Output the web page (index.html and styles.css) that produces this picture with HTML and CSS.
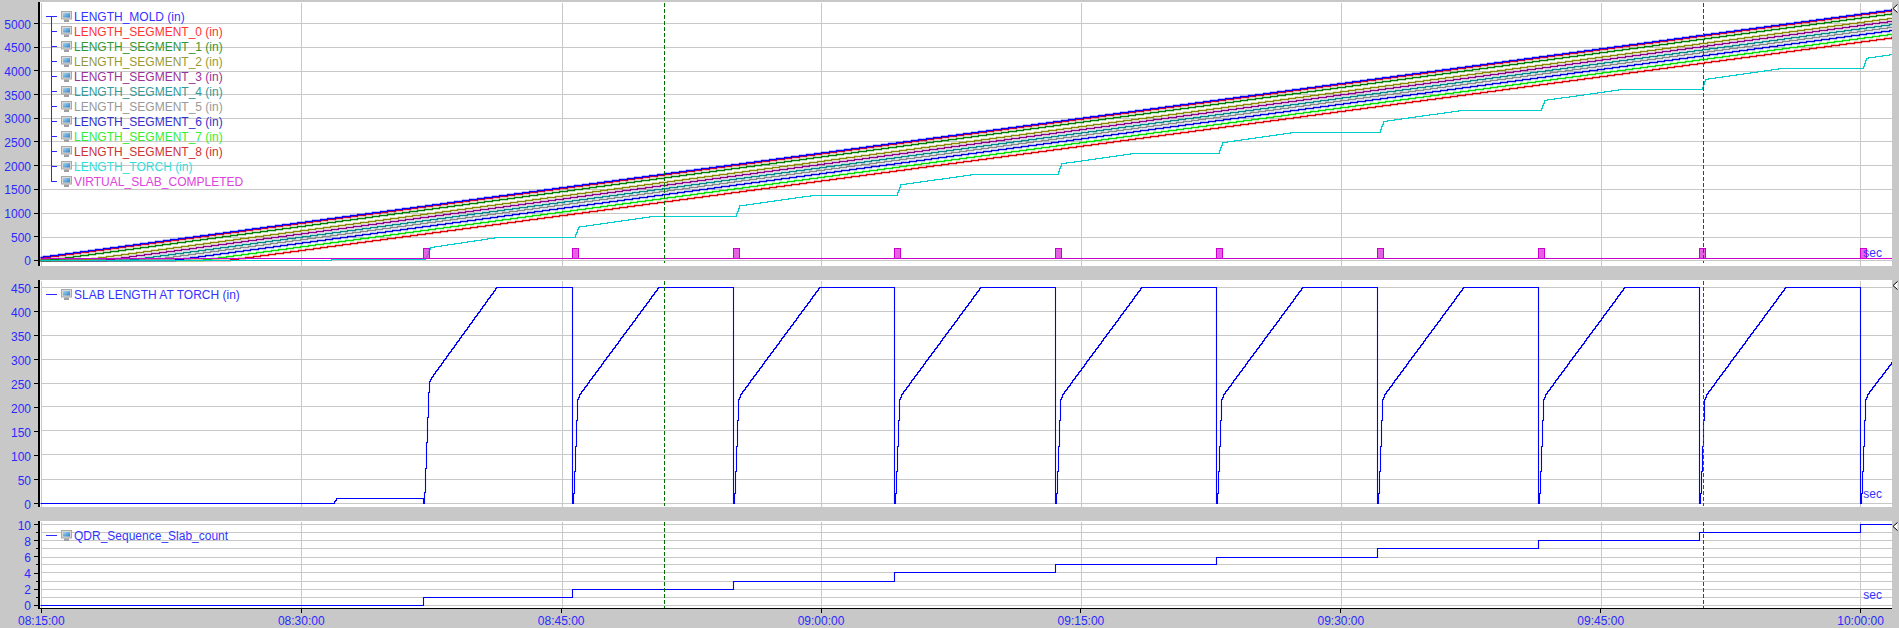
FILE: index.html
```html
<!DOCTYPE html>
<html lang="en">
<head>
    <meta charset="UTF-8">
    <title>Trend</title>
    <link rel="stylesheet" href="styles.css">
</head>
<body>
    <svg class="defs" width="0" height="0">
        <defs>
            <linearGradient id="screen" x1="0" y1="0" x2="1" y2="1">
                <stop offset="0" stop-color="#a8d8f0"/>
                <stop offset="1" stop-color="#2f80c8"/>
            </linearGradient>
            <symbol id="monitor" viewBox="0 0 11 11">
                <rect x="0.5" y="0.5" width="10" height="7.5" fill="#d8d8d8" stroke="#a8a8a8"/>
                <rect x="2" y="2" width="7" height="4.5" fill="url(#screen)"/>
                <rect x="3" y="8.5" width="5" height="2.5" fill="#a0a0a0"/>
            </symbol>
            <symbol id="marker" viewBox="0 0 7 9">
                <path d="M5.5 0.5 L1 4.5 L5.5 8.5" fill="#fff" stroke="#000"/>
            </symbol>
        </defs>
    </svg>

    <div class="charts">
        <div class="panel panel-top">
            <div class="yaxis">
                <div class="tick"><span>5000</span></div>
                <div class="tick"><span>4500</span></div>
                <div class="tick"><span>4000</span></div>
                <div class="tick"><span>3500</span></div>
                <div class="tick"><span>3000</span></div>
                <div class="tick"><span>2500</span></div>
                <div class="tick"><span>2000</span></div>
                <div class="tick"><span>1500</span></div>
                <div class="tick"><span>1000</span></div>
                <div class="tick"><span>500</span></div>
                <div class="tick"><span>0</span></div>
            </div>
            <div class="plot">
                <svg id="lengths" class="graph" viewBox="40 2 1852 264"></svg>
                <ul class="legend tree">
                    <li class="c-mold"><svg class="icon"><use href="#monitor"/></svg>LENGTH_MOLD (in)</li>
                    <li class="c-seg0"><svg class="icon"><use href="#monitor"/></svg>LENGTH_SEGMENT_0 (in)</li>
                    <li class="c-seg1"><svg class="icon"><use href="#monitor"/></svg>LENGTH_SEGMENT_1 (in)</li>
                    <li class="c-seg2"><svg class="icon"><use href="#monitor"/></svg>LENGTH_SEGMENT_2 (in)</li>
                    <li class="c-seg3"><svg class="icon"><use href="#monitor"/></svg>LENGTH_SEGMENT_3 (in)</li>
                    <li class="c-seg4"><svg class="icon"><use href="#monitor"/></svg>LENGTH_SEGMENT_4 (in)</li>
                    <li class="c-seg5"><svg class="icon"><use href="#monitor"/></svg>LENGTH_SEGMENT_5 (in)</li>
                    <li class="c-seg6"><svg class="icon"><use href="#monitor"/></svg>LENGTH_SEGMENT_6 (in)</li>
                    <li class="c-seg7"><svg class="icon"><use href="#monitor"/></svg>LENGTH_SEGMENT_7 (in)</li>
                    <li class="c-seg8"><svg class="icon"><use href="#monitor"/></svg>LENGTH_SEGMENT_8 (in)</li>
                    <li class="c-torch"><svg class="icon"><use href="#monitor"/></svg>LENGTH_TORCH (in)</li>
                    <li class="c-virtual"><svg class="icon"><use href="#monitor"/></svg>VIRTUAL_SLAB_COMPLETED</li>
                </ul>
                <div class="unit">sec</div>
            </div>
            <div class="gutter"><svg class="marker"><use href="#marker"/></svg></div>
        </div>

        <div class="panel panel-mid">
            <div class="yaxis">
                <div class="tick"><span>450</span></div>
                <div class="tick"><span>400</span></div>
                <div class="tick"><span>350</span></div>
                <div class="tick"><span>300</span></div>
                <div class="tick"><span>250</span></div>
                <div class="tick"><span>200</span></div>
                <div class="tick"><span>150</span></div>
                <div class="tick"><span>100</span></div>
                <div class="tick"><span>50</span></div>
                <div class="tick"><span>0</span></div>
            </div>
            <div class="plot">
                <svg id="slab" class="graph" viewBox="40 280 1852 227"></svg>
                <ul class="legend">
                    <li class="c-mold"><svg class="icon"><use href="#monitor"/></svg>SLAB LENGTH AT TORCH (in)</li>
                </ul>
                <div class="unit">sec</div>
            </div>
            <div class="gutter"><svg class="marker"><use href="#marker"/></svg></div>
        </div>

        <div class="panel panel-low">
            <div class="yaxis">
                <div class="tick"><span>10</span></div>
                <div class="tick minor"></div>
                <div class="tick"><span>8</span></div>
                <div class="tick minor"></div>
                <div class="tick"><span>6</span></div>
                <div class="tick minor"></div>
                <div class="tick"><span>4</span></div>
                <div class="tick minor"></div>
                <div class="tick"><span>2</span></div>
                <div class="tick minor"></div>
                <div class="tick"><span>0</span></div>
            </div>
            <div class="plot">
                <svg id="count" class="graph" viewBox="40 521 1852 87"></svg>
                <ul class="legend">
                    <li class="c-mold"><svg class="icon"><use href="#monitor"/></svg>QDR_Sequence_Slab_count</li>
                </ul>
                <div class="unit">sec</div>
            </div>
            <div class="gutter"><svg class="marker"><use href="#marker"/></svg></div>
        </div>
    </div>

    <div class="xaxis">
        <div class="xlabel">08:15:00</div>
        <div class="xlabel">08:30:00</div>
        <div class="xlabel">08:45:00</div>
        <div class="xlabel">09:00:00</div>
        <div class="xlabel">09:15:00</div>
        <div class="xlabel">09:30:00</div>
        <div class="xlabel">09:45:00</div>
        <div class="xlabel">10:00:00</div>
    </div>

    <script src="script.js"></script>
</body>
</html>
```

FILE: styles.css
```css
* {margin: 0;padding: 0;box-sizing: border-box;}

html, body {
    height: 628px;
    overflow: hidden;
}
body {
    background-color: #c8c8c8;
    font-family: "Liberation Sans", Arial, sans-serif;
    font-size: 12px;
    color: #2a2aff;
}
.defs {
    position: absolute;
}

.charts {
    display: flex;
    flex-direction: column;
    gap: 14px;
    padding-top: 2px;
}
.panel {
    display: flex;
}
.panel-top {height: 264px;}
.panel-mid {height: 227px;}
.panel-low {height: 88px;}

.yaxis {
    display: flex;
    flex-direction: column;
    justify-content: space-between;
    width: 38px;
}
.panel-top .yaxis {padding: 21px 0 5px;}
.panel-mid .yaxis {padding: 7px 0 3px;}
.panel-low .yaxis {padding: 3px 0 3px;}

.tick {
    display: flex;
    align-items: center;
    justify-content: flex-end;
    gap: 3px;
    height: 1px;
    line-height: 14px;
}
.tick span {
    padding-top: 2px;
}
.tick::after {
    content: "";
    width: 4px;
    height: 1px;
    background-color: #000;
}
.tick.minor::after {
    width: 2px;
}

.plot {
    position: relative;
    width: 1854px;
    background-color: #fff;
    border-left: 2px solid #000;
}
.panel-low .plot {
    border-bottom: 1px solid #000;
}
.graph {
    display: block;
    width: 1852px;
    height: 100%;
}

.legend {
    position: absolute;
    top: 7px;
    left: 6px;
    list-style: none;
    line-height: 15px;
}
.legend li {
    position: relative;
    display: flex;
    align-items: center;
    gap: 2px;
    height: 15px;
    padding: 2px 0 0 15px;
    white-space: nowrap;
}
.legend li::before {
    content: "";
    position: absolute;
    left: 5px;
    top: 7px;
    width: 6px;
    height: 1px;
    background-color: #2a2aff;
}
.legend li:first-child::before {
    left: 0;
    width: 11px;
}
.tree li:not(:last-child)::after {
    content: "";
    position: absolute;
    left: 5px;
    top: 7px;
    width: 1px;
    height: 15px;
    background-color: #2a2aff;
}
.icon {
    width: 11px;
    height: 11px;
    flex: none;
    margin-top: -2px;
}
.c-mold {color: #3333ff;}
.c-seg0 {color: #ff3333;}
.c-seg1 {color: #339933;}
.c-seg2 {color: #999933;}
.c-seg3 {color: #993399;}
.c-seg4 {color: #339999;}
.c-seg5 {color: #999999;}
.c-seg6 {color: #3333cc;}
.c-seg7 {color: #33ee33;}
.c-seg8 {color: #cc3333;}
.c-torch {color: #33dddd;}
.c-virtual {color: #dd44dd;}

.unit {
    position: absolute;
    right: 10px;
    bottom: 6px;
    line-height: 14px;
    color: #3333ff;
}

.gutter {
    width: 7px;
    padding-top: 2px;
}
.panel-mid .gutter, .panel-low .gutter {
    padding-top: 1px;
}
.marker {
    display: block;
    width: 7px;
    height: 9px;
}

.xaxis {
    display: flex;
    justify-content: space-between;
    padding: 0 15px 0 18px;
    line-height: 14px;
}
.xlabel {
    display: flex;
    flex-direction: column;
    align-items: center;
    gap: 1px;
}
.xlabel::before {
    content: "";
    width: 1px;
    height: 4px;
    background-color: #000;
}
```

FILE: script.js
```js
var LEFT = 40;
var RIGHT = 1892;
var gridX = [41, 301, 562, 821, 1081, 1341, 1601, 1860];
var cursorX = [664, 1703];
// x of each slab cut, same for all three charts
var cuts = [423, 572, 733, 894, 1055, 1216, 1377, 1538, 1699, 1860];

// walk the points pixel by pixel so that sloped parts come out as stairs
function stairs(points) {
    var d = "M" + points[0][0] + " " + Math.round(points[0][1]);
    for (var i = 1; i < points.length; i++) {
        var a = points[i - 1];
        var b = points[i];
        var last = Math.round(a[1]);
        if (b[0] == a[0]) {
            last = Math.round(b[1]);
            d += "V" + last;
            continue;
        }
        for (var x = a[0] + 1; x <= b[0]; x++) {
            var y = Math.round(a[1] + (b[1] - a[1]) * (x - a[0]) / (b[0] - a[0]));
            if (y != last || x == b[0]) {
                d += "H" + x + "V" + y;
                last = y;
            }
        }
    }
    return d;
}

function line(points, color, width) {
    return '<path d="' + stairs(points) + '" fill="none" stroke="' + color + '" stroke-width="' + width + '" shape-rendering="geometricPrecision"/>';
}

function background(rows, top, bottom) {
    var s = "";
    for (var i = 0; i < rows.length; i++) {
        s += '<path d="M' + LEFT + " " + rows[i] + "H" + RIGHT + '" stroke="#c8c8c8"/>';
    }
    for (var j = 0; j < gridX.length; j++) {
        s += '<path d="M' + gridX[j] + " " + top + "V" + bottom + '" stroke="#c8c8c8"/>';
    }
    return s;
}

function cursors(top, end) {
    var s = "";
    for (var j = 0; j < cursorX.length; j++) {
        s += '<path d="M' + cursorX[j] + " " + top + "V" + end + '" stroke="#007000" stroke-dasharray="4 2"/>';
    }
    return s;
}

function draw(id, content) {
    document.getElementById(id).innerHTML = '<g transform="translate(.5 .5)" shape-rendering="crispEdges">' + content + "</g>";
}

// top chart
function lengthLine(offset) {
    var x0 = 41;
    var y0 = 256.7 + offset;
    var slope = 247.4 / 1851;
    var zero = x0 + (y0 - 260) / slope;
    if (offset < 3.3) {
        return [[LEFT, y0 + slope], [RIGHT, 9.3 + offset]];
    }
    return [[LEFT, 260], [Math.round(zero), 260], [RIGHT, 9.3 + offset]];
}

function torchLine() {
    var pts = [[LEFT, 260], [330, 260], [331, 259], [424, 259], [425, 258], [430, 247], [497, 237]];
    for (var k = 0; k < 9; k++) {
        var flat = 237 - 21.1 * k;
        var jump = cuts[k + 1] + 2;
        pts.push([jump, flat]);
        pts.push([jump + 4, flat - 10.5]);
        if (k == 8) {
            pts.push([RIGHT, 54]);
        } else {
            pts.push([jump + 79, flat - 21.1]);
        }
    }
    return pts;
}

function pulses() {
    var s = "";
    for (var i = 0; i < cuts.length; i++) {
        s += '<rect x="' + cuts[i] + '" y="248" width="6" height="10" fill="#dc3cdc" fill-opacity=".8" stroke="#cc00cc"/>';
    }
    return s;
}

var topChart = background([23, 47, 71, 94, 118, 141, 165, 189, 213, 237, 260], 2, 266);
var series = [
    [28, "#dd0000"], [24.4, "#00dd00"], [20.7, "#0000dd"], [17.4, "#888888"], [14.7, "#008888"],
    [11.4, "#880088"], [8.4, "#888800"], [4, "#008000"], [1, "#ff0000"], [0, "#0000ff"]
];
for (var i = 0; i < series.length; i++) {
    topChart += line(lengthLine(series[i][0]), series[i][1], 1.3);
}
topChart += line(torchLine(), "#00cccc", 1.15);
topChart += '<path d="M' + LEFT + " 258H" + RIGHT + '" stroke="#cc00cc"/>';
topChart += pulses();
topChart += cursors(2, 262);
draw("lengths", topChart);

// middle chart
function slabLine() {
    var peak = 287;
    var pts = [[LEFT, 503], [333, 503], [336, 498], [423, 498], [423, 503],
        [424, 503], [424, 492], [425, 492], [425, 468], [426, 468], [426, 442], [427, 442], [427, 417],
        [428, 417], [428, 392], [429, 392], [429, 381], [431, 377], [496, peak]];
    for (var k = 1; k < cuts.length; k++) {
        var c = cuts[k];
        pts.push([c, peak]);
        pts.push([c, 503]);
        pts.push([c + 1, 503]);
        pts.push([c + 1, 493]);
        pts.push([c + 2, 493]);
        pts.push([c + 2, 471]);
        pts.push([c + 3, 471]);
        pts.push([c + 3, 446]);
        pts.push([c + 4, 446]);
        pts.push([c + 4, 420]);
        pts.push([c + 5, 420]);
        pts.push([c + 5, 399]);
        pts.push([c + 7, 394]);
        if (k < cuts.length - 1) {
            pts.push([c + 86, peak]);
        } else {
            pts.push([RIGHT, 361]);
        }
    }
    return pts;
}

var midChart = background([287, 311, 335, 359, 383, 406, 430, 454, 479, 503], 280, 507);
midChart += line(slabLine(), "#0000ff", 1.1);
midChart += cursors(280, 505);
draw("slab", midChart);

// bottom chart
function countLine() {
    var rows = [605, 597, 589, 581, 572, 564, 557, 548, 540, 532, 524];
    var pts = [[LEFT, 605]];
    for (var k = 0; k < cuts.length; k++) {
        pts.push([cuts[k], rows[k]]);
        pts.push([cuts[k], rows[k + 1]]);
    }
    pts.push([RIGHT, 524]);
    return pts;
}

var lowChart = background([524, 532, 540, 548, 557, 564, 572, 581, 589, 597, 605], 521, 608);
lowChart += line(countLine(), "#0000ff", 1.1);
lowChart += cursors(521, 607);
draw("count", lowChart);
```
